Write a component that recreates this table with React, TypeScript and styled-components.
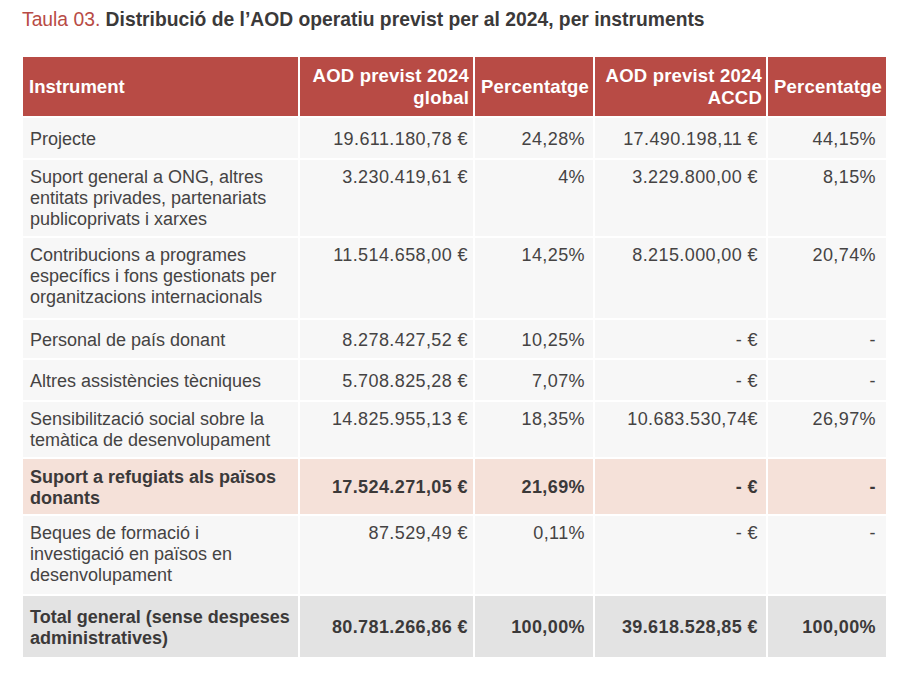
import styled, {createGlobalStyle} from "styled-components";

const GlobalStyle = createGlobalStyle`
  body {
    margin: 0;
    background: #ffffff;
    font-family: "Liberation Sans", Arial, sans-serif;
    color: #444444;
  }
`

type Variant = 'normal' | 'highlight' | 'total'

interface Row {
    label: string
    global: string
    pct: string
    accd: string
    pctAccd: string
    variant?: Variant
    center?: boolean
    height?: number
}

const rows: Array<Row> = [
    {label: 'Projecte', global: '19.611.180,78 €', pct: '24,28%', accd: '17.490.198,11 €', pctAccd: '44,15%', center: true, height: 40},
    {label: 'Suport general a ONG, altres entitats privades, partenariats publicoprivats i xarxes', global: '3.230.419,61 €', pct: '4%', accd: '3.229.800,00 €', pctAccd: '8,15%', height: 76},
    {label: 'Contribucions a programes específics i fons gestionats per organitzacions internacionals', global: '11.514.658,00 €', pct: '14,25%', accd: '8.215.000,00 €', pctAccd: '20,74%', height: 80},
    {label: 'Personal de país donant', global: '8.278.427,52 €', pct: '10,25%', accd: '- €', pctAccd: '-', center: true, height: 38},
    {label: 'Altres assistències tècniques', global: '5.708.825,28 €', pct: '7,07%', accd: '- €', pctAccd: '-', center: true, height: 40},
    {label: 'Sensibilització social sobre la temàtica de desenvolupament', global: '14.825.955,13 €', pct: '18,35%', accd: '10.683.530,74€', pctAccd: '26,97%', height: 55},
    {label: 'Suport a refugiats als països donants', global: '17.524.271,05 €', pct: '21,69%', accd: '- €', pctAccd: '-', variant: 'highlight', center: true, height: 55},
    {label: 'Beques de formació i investigació en països en desenvolupament', global: '87.529,49 €', pct: '0,11%', accd: '- €', pctAccd: '-', height: 78},
    {label: 'Total general (sense despeses administratives)', global: '80.781.266,86 €', pct: '100,00%', accd: '39.618.528,85 €', pctAccd: '100,00%', variant: 'total', center: true, height: 61},
]

const colWidths = [275, 173, 118, 171, 118]

const Page = styled.div`
  padding: 9px 0 0 21px;
`

const Title = styled.h1`
  margin: 0 0 24px 1px;
  font-size: 19.3px;
  line-height: 22px;
  font-weight: bold;
  color: #3b3939;

  span {
    font-weight: normal;
    color: #b84b45;
  }
`

const Table = styled.table`
  width: 867px;
  table-layout: fixed;
  border-collapse: separate;
  border-spacing: 2px;
  font-size: 18px;
  line-height: 21px;
`

const Col = styled.col<{ $w: number }>`
  width: ${p => p.$w}px;
`

const HeadCell = styled.th<{ $left?: boolean }>`
  background: #b84b45;
  color: #ffffff;
  font-weight: bold;
  font-size: 18.5px;
  line-height: 22px;
  letter-spacing: ${p => p.$left ? '0' : '0.2px'};
  height: 59px;
  padding: 0 4px 0 6px;
  text-align: ${p => p.$left ? 'left' : 'right'};
  vertical-align: middle;
  white-space: ${p => p.$left ? 'normal' : 'pre-line'};
  box-sizing: border-box;
`

const BodyRow = styled.tr<{ $variant: Variant, $center?: boolean, $h?: number }>`
  height: ${p => p.$h ? `${p.$h}px` : 'auto'};

  td {
    background: ${p => p.$variant === 'highlight' ? '#f5e1d9' : p.$variant === 'total' ? '#e3e3e3' : '#f7f7f7'};
    font-weight: ${p => p.$variant === 'normal' ? 'normal' : 'bold'};
    color: ${p => p.$variant === 'normal' ? '#454343' : '#3b3939'};
    vertical-align: ${p => p.$center ? 'middle' : 'top'};
    padding: 7px 8px 5px 7px;
    text-align: right;
    letter-spacing: 0.4px;
    box-sizing: border-box;
  }

  td:first-child {
    text-align: left;
    letter-spacing: 0;
  }

  td:nth-child(2) {
    padding-right: 5px;
  }

  td:nth-child(5) {
    padding-right: 10px;
  }
`

const App = () => {
    return (
        <Page>
            <GlobalStyle/>
            <Title><span>Taula 03.</span> Distribució de l’AOD operatiu previst per al 2024, per instruments</Title>
            <Table>
                <colgroup>
                    {colWidths.map((w, i) => <Col key={i} $w={w}/>)}
                </colgroup>
                <thead>
                <tr>
                    <HeadCell $left>Instrument</HeadCell>
                    <HeadCell>{'AOD previst 2024\nglobal'}</HeadCell>
                    <HeadCell>Percentatge</HeadCell>
                    <HeadCell>{'AOD previst 2024\nACCD'}</HeadCell>
                    <HeadCell>Percentatge</HeadCell>
                </tr>
                </thead>
                <tbody>
                {rows.map((row) => (
                    <BodyRow key={row.label} $variant={row.variant ?? 'normal'} $center={row.center} $h={row.height}>
                        <td>{row.label}</td>
                        <td>{row.global}</td>
                        <td>{row.pct}</td>
                        <td>{row.accd}</td>
                        <td>{row.pctAccd}</td>
                    </BodyRow>
                ))}
                </tbody>
            </Table>
        </Page>
    )
}

export default App;
